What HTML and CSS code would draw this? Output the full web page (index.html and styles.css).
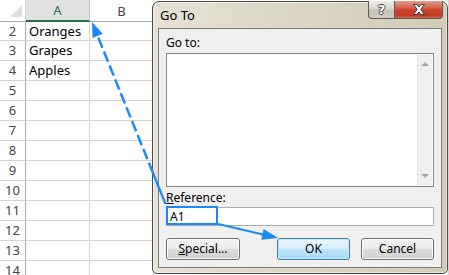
FILE: index.html
```html
<!DOCTYPE html>
<html>
<head>
<meta charset="utf-8">
<link rel="stylesheet" href="styles.css">
</head>
<body>
<div class="sheet">
  <div class="hc corner"><span class="tri"></span></div>
  <div class="hc colhead sel">A</div>
  <div class="hc colhead">B</div>
  <div class="hc colhead"></div>

  <div class="rh">2</div><div class="cell">Oranges</div><div class="cell"></div><div class="cell"></div>
  <div class="rh">3</div><div class="cell">Grapes</div><div class="cell"></div><div class="cell"></div>
  <div class="rh">4</div><div class="cell">Apples</div><div class="cell"></div><div class="cell"></div>
  <div class="rh">5</div><div class="cell"></div><div class="cell"></div><div class="cell"></div>
  <div class="rh">6</div><div class="cell"></div><div class="cell"></div><div class="cell"></div>
  <div class="rh">7</div><div class="cell"></div><div class="cell"></div><div class="cell"></div>
  <div class="rh">8</div><div class="cell"></div><div class="cell"></div><div class="cell"></div>
  <div class="rh">9</div><div class="cell"></div><div class="cell"></div><div class="cell"></div>
  <div class="rh">10</div><div class="cell"></div><div class="cell"></div><div class="cell"></div>
  <div class="rh">11</div><div class="cell"></div><div class="cell"></div><div class="cell"></div>
  <div class="rh">12</div><div class="cell"></div><div class="cell"></div><div class="cell"></div>
  <div class="rh">13</div><div class="cell"></div><div class="cell"></div><div class="cell"></div>
  <div class="rh">14</div><div class="cell"></div><div class="cell"></div><div class="cell"></div>
</div>

<div class="dialog">
  <div class="titlebar">Go To</div>
  <div class="caption-btns">
    <div class="cap help">?</div>
    <div class="cap close">
      <svg width="12" height="11" viewBox="0 0 12 11">
        <path d="M0.5 0.5 H4 L6 3 L8 0.5 H11.5 L7.8 5.5 L11.5 10.5 H8 L6 8 L4 10.5 H0.5 L4.2 5.5 Z" fill="#fff" stroke="#3a3a3a" stroke-width="1" stroke-linejoin="round"/>
      </svg>
    </div>
  </div>
  <div class="client">
    <div class="label">Go to:</div>
    <div class="listbox">
      <div class="scroll">
        <span class="arr up"></span>
        <span class="arr down"></span>
      </div>
    </div>
    <div class="label ref"><u>R</u>eference:</div>
    <div class="refinput">A1</div>
    <div class="buttons">
      <div class="btn"><span><u>S</u>pecial...</span></div>
      <div class="btn default push">OK</div>
      <div class="btn">Cancel</div>
    </div>
  </div>
</div>

<svg class="overlay" width="449" height="275" viewBox="0 0 449 275">
  <line x1="153" y1="173" x2="97.6" y2="35.9" stroke="#1a8af5" stroke-width="2.5" stroke-dasharray="11 4"/>
  <line x1="165.5" y1="204" x2="153" y2="173" stroke="#1a8af5" stroke-width="2.2"/>
  <polygon points="92,22 102.7,33.8 92.5,38" fill="#1a8af5"/>
  <rect x="167" y="207" width="50" height="17" fill="none" stroke="#1a8af5" stroke-width="2"/>
  <line x1="218" y1="224" x2="263" y2="234.5" stroke="#1a8af5" stroke-width="2.2"/>
  <polygon points="278,238 261.2,239.8 263.7,229" fill="#1a8af5"/>
</svg>
</body>
</html>
```

FILE: styles.css
```css
html, body {
  margin: 0;
  padding: 0;
}
body {
  width: 449px;
  height: 275px;
  overflow: hidden;
  position: relative;
  background: #fff;
  font-family: "Noto Sans", "DejaVu Sans", sans-serif;
}

/* ---------- spreadsheet ---------- */
.sheet {
  display: grid;
  grid-template-columns: 26px 64px 64px 1fr;
  grid-template-rows: 22px 19px repeat(12, 20px);
  font-size: 13px;
}
.sheet > div {
  box-sizing: border-box;
  border-right: 1px solid #d4d4d4;
  border-bottom: 1px solid #d4d4d4;
}
.hc {
  border-bottom: 1px solid #ababab !important;
  background: #fff;
  color: #444;
  display: flex;
  align-items: center;
  justify-content: center;
  line-height: 20px;
}
.corner {
  justify-content: flex-end;
  align-items: flex-end;
  padding: 0 3px 4px 0;
}
.tri {
  width: 0;
  height: 0;
  border-left: 12px solid transparent;
  border-bottom: 12px solid #dfdfdf;
}
.colhead.sel {
  background: #e1e1e1;
  color: #217346;
  border-bottom: 2px solid #217346 !important;
  border-right-color: #c6c6c6;
}
.rh {
  border-right: 1px solid #ababab !important;
  color: #444;
  text-align: center;
  line-height: 19px;
}
.cell {
  color: #000;
  padding-left: 3px;
  line-height: 19px;
}

/* ---------- dialog ---------- */
.dialog {
  position: absolute;
  left: 152px;
  top: 1px;
  width: 296px;
  height: 273px;
  box-sizing: border-box;
  border: 1px solid #4b4b4b;
  border-radius: 7px 7px 5px 5px;
  background: linear-gradient(to right, #e7e2d5 0%, #ddd7c5 45%, #d2cab4 100%);
  box-shadow: inset 0 0 0 1px rgba(255, 255, 255, 0.45);
  padding: 0 5px 5px;
  display: flex;
  flex-direction: column;
  font-size: 12px;
  color: #000;
}
.titlebar {
  height: 26px;
  padding-left: 2px;
  display: flex;
  align-items: center;
  font-size: 13px;
  padding-bottom: 1px;
  box-sizing: border-box;
}
.caption-btns {
  position: absolute;
  top: -1px;
  right: 4px;
  display: flex;
}
.cap {
  height: 18px;
  box-sizing: border-box;
  border: 1px solid #5c5b57;
  border-top: none;
  display: flex;
  align-items: center;
  justify-content: center;
}
.help {
  width: 26px;
  border-right: none;
  border-radius: 0 0 0 4px;
  background: linear-gradient(#ecebe6 0%, #dcd9cf 45%, #c4c0b2 55%, #cfccc1 100%);
  color: #fff;
  font-family: "DejaVu Sans", sans-serif;
  font-weight: bold;
  font-size: 13px;
  text-shadow: -1px 0 #444, 1px 0 #444, 0 -1px #444, 0 1px #444;
  line-height: 16px;
}
.close {
  width: 49px;
  border-radius: 0 0 4px 0;
  background: linear-gradient(#e59c8b 0%, #d86a54 35%, #c8422b 55%, #c23c27 85%, #d46650 100%);
}

.client {
  flex: 1;
  border: 1px solid #7b7b7b;
  background: #f0f0f0;
  padding: 6px 7px 0;
  display: flex;
  flex-direction: column;
}
.label {
  line-height: 16px;
  height: 16px;
  margin-bottom: 2px;
}
.listbox {
  height: 134px;
  box-sizing: border-box;
  border: 1px solid #828790;
  background: #fff;
  display: flex;
  justify-content: flex-end;
  padding: 1px;
}
.scroll {
  width: 15px;
  background: #f0f0f0;
  border-left: 1px solid #e6e6e6;
  display: flex;
  flex-direction: column;
  justify-content: space-between;
  align-items: center;
  padding: 7px 0 7px;
  box-sizing: border-box;
}
.arr {
  width: 0;
  height: 0;
  border-left: 4px solid transparent;
  border-right: 4px solid transparent;
}
.arr.up {
  border-bottom: 4px solid #a6a6a6;
}
.arr.down {
  border-top: 4px solid #a6a6a6;
}
.label.ref {
  margin-top: 3px;
  line-height: 15px;
  height: 15px;
  margin-bottom: 2px;
}
.refinput {
  height: 19px;
  box-sizing: border-box;
  border: 1px solid #abadb3;
  background: #fff;
  padding-left: 3px;
  line-height: 17px;
}
.buttons {
  display: flex;
  margin-top: 12px;
  gap: 11px;
}
.btn {
  width: 73px;
  height: 22px;
  box-sizing: border-box;
  border: 1px solid #707070;
  border-radius: 3px;
  background: linear-gradient(#f2f2f2 0%, #ebebeb 50%, #dddddd 50%, #cfcfcf 100%);
  box-shadow: inset 0 0 0 1px #fbfbfb;
  display: flex;
  align-items: center;
  justify-content: center;
  line-height: 18px;
}
.btn:first-child {
  width: 74px;
}
.btn.push {
  margin-left: auto;
}
.btn.default {
  border-color: #3c7fb1;
  background: linear-gradient(#eaf6fd 0%, #d9f0fc 50%, #bee6fd 50%, #a7d9f5 100%);
  box-shadow: inset 0 0 0 1px #c5e8fb;
}

.overlay {
  position: absolute;
  left: 0;
  top: 0;
  pointer-events: none;
}
```
